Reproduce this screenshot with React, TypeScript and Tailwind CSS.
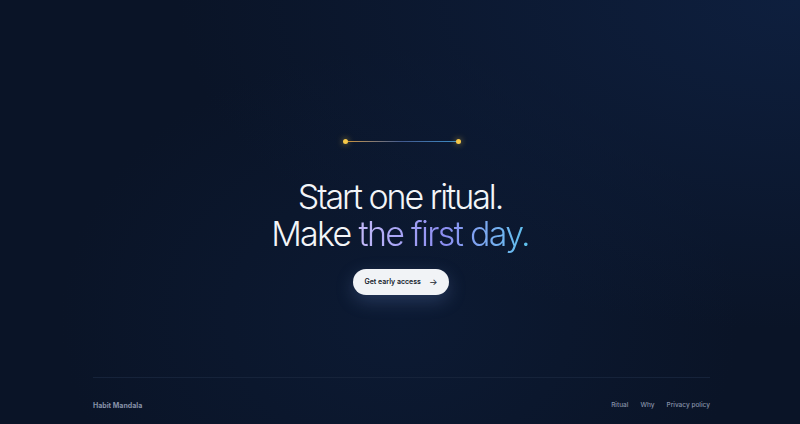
// Habit Mandala — landing hero with footer.

const links = ['Ritual', 'Why', 'Privacy policy'];

function Divider() {
  return (
    <div className="flex items-center ml-[3px]">
      <span className="w-[5px] h-[5px] rounded-full bg-[#f7c948] shadow-[0_0_6px_rgba(247,201,72,0.7)]" />
      <span className="w-[108px] h-[1.5px] bg-gradient-to-r from-[#c8923a] via-[#40598e] to-[#3b8cc4]" />
      <span className="w-[5px] h-[5px] rounded-full bg-[#f7c948] shadow-[0_0_6px_rgba(247,201,72,0.7)]" />
    </div>
  );
}

export default function App() {
  return (
    <div
      className="w-[800px] h-[424px] flex flex-col overflow-hidden bg-[#0a1427] bg-[radial-gradient(ellipse_at_100%_0%,#0e1f3e_0%,rgba(10,20,39,0)_55%),radial-gradient(ellipse_at_50%_75%,#0c1a33_0%,rgba(10,20,39,0)_60%)]"
      style={{ fontFamily: 'Inter, "Noto Sans", sans-serif' }}
    >
      {/* Hero */}
      <main className="flex-1 flex flex-col items-center pt-[139px]">
        <Divider />
        <h1 className="mt-[34px] text-center text-[34px] leading-[37px] font-light tracking-[-0.05em] text-[#f3f5f8]">
          <span className="block tracking-[-0.06em]">Start one ritual.</span>
          <span className="block pb-[2px]">
            Make{' '}
            <span className="bg-gradient-to-r from-[#c3b9f7] via-[#8d8ef2] to-[#5cc3ee] bg-clip-text text-transparent">
              the first day.
            </span>
          </span>
        </h1>
        <button className="mt-[15px] ml-[2px] h-[26px] px-[11px] rounded-full bg-[#f1f3f6] text-[#141b2b] text-[7px] font-semibold flex items-center gap-[8px] shadow-[0_6px_18px_rgba(120,150,220,0.25)]">
          Get early access
          <span className="text-[9px] font-normal">→</span>
        </button>
      </main>

      {/* Footer */}
      <footer className="ml-[93px] mr-[90px] border-t border-[#16233a] h-[47px] flex items-end justify-between pb-[13px]">
        <span className="text-[7px] font-bold text-[#8792a8]">Habit Mandala</span>
        <nav className="flex gap-[12px] text-[6.5px] font-medium">
          {links.map((l) => (
            <span key={l} className="text-[#8792a8]">
              {l}
            </span>
          ))}
        </nav>
      </footer>
    </div>
  );
}
